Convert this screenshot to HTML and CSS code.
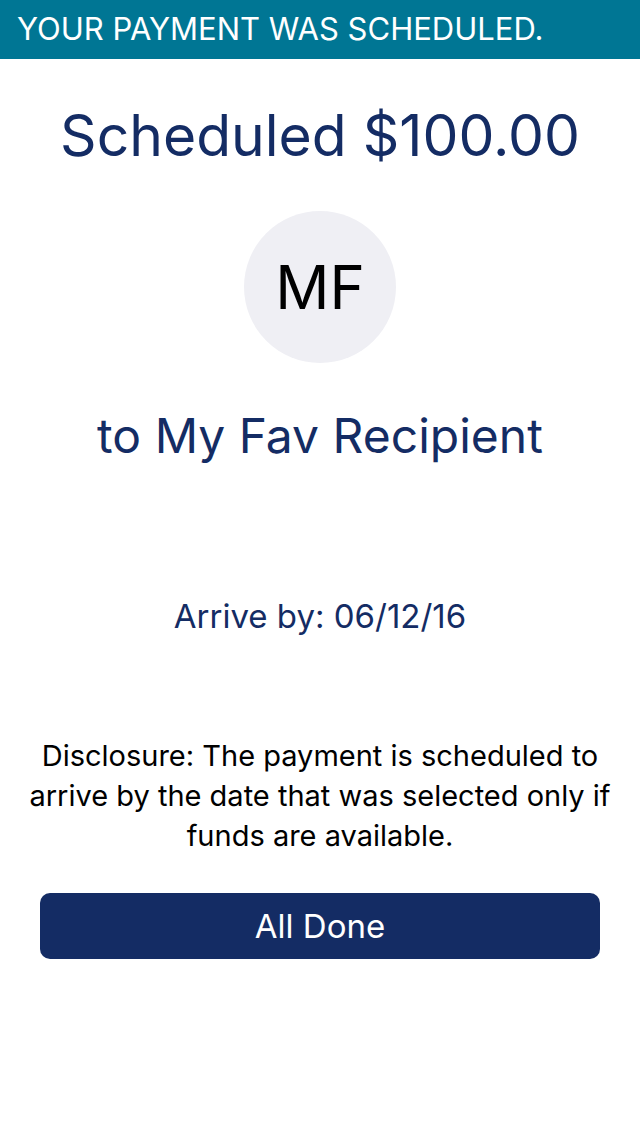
FILE: index.html
```html
<!DOCTYPE html>
<html lang="en">
<head>
<meta charset="utf-8">
<meta name="viewport" content="width=device-width, initial-scale=1">
<title>Payment scheduled</title>
<link rel="stylesheet" href="styles.css">
</head>
<body>
<header class="banner" role="status">YOUR PAYMENT WAS SCHEDULED.</header>
<main class="confirmation">
<h1 class="amount">Scheduled $100.00</h1>
<div class="avatar">MF</div>
<h2 class="recipient">to My Fav Recipient</h2>
<p class="arrival">Arrive by: 06/12/16</p>
<p class="disclosure">Disclosure: The payment is scheduled to arrive by the date that was selected only if funds are available.</p>
<button class="done" type="button">All Done</button>
</main>
</body>
</html>
```
FILE: styles.css
```css
* {
  box-sizing: border-box;
}

body {
  margin: 0;
  background: #fff;
  color: #000;
  font-family: Inter, "Liberation Sans", sans-serif;
}

.banner {
  padding: 9px 17px 10px;
  background: #007694;
  color: #fff;
  font-size: 31px;
  line-height: 40px;
}

.confirmation {
  display: flex;
  flex-direction: column;
  align-items: center;
  padding: 42px 24px;
  text-align: center;
}

.amount,
.recipient,
.arrival,
.disclosure {
  margin: 0;
  font-weight: 400;
}

.amount,
.recipient,
.arrival {
  color: #142c64;
}

.amount {
  font-size: 57px;
  line-height: 70px;
}

.avatar {
  display: grid;
  place-items: center;
  width: 152px;
  height: 152px;
  margin-top: 40px;
  border-radius: 50%;
  background: #efeff4;
  font-size: 60px;
}

.recipient {
  margin-top: 43px;
  font-size: 48px;
  line-height: 60px;
}

.arrival {
  margin-top: 130px;
  font-size: 33px;
  line-height: 40px;
}

.disclosure {
  margin-top: 100px;
  font-size: 29px;
  line-height: 40px;
}

.done {
  align-self: stretch;
  margin: 37px 16px 0;
  padding: 13px;
  border: 0;
  border-radius: 10px;
  background: #142c64;
  color: #fff;
  font-family: inherit;
  font-size: 33px;
  line-height: 40px;
}
```
